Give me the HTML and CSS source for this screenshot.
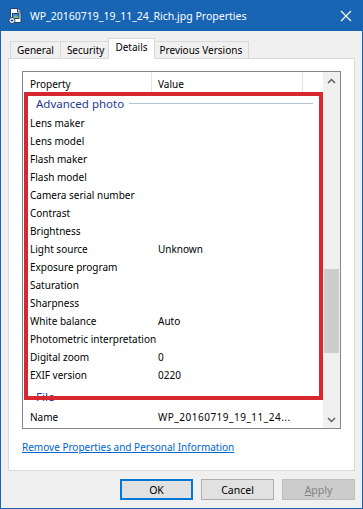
FILE: index.html
```html
<!DOCTYPE html>
<html lang="en">

<head>
  <meta charset="UTF-8">
  <title>WP_20160719_19_11_24_Rich.jpg Properties</title>
  <link rel="stylesheet" href="styles.css">
</head>

<body>
<div class="window">
  <div class="titlebar">
    <svg class="app-icon" width="15" height="17" viewBox="0 0 15 17">
      <path d="M2.5 1.5h7l3.5 3.5v10.5h-10.5z" fill="#fff" stroke="#1d3f6e"/>
      <path d="M9.5 1.5v3.5h3.5" fill="#dfe8f2" stroke="#1d3f6e"/>
      <rect x="4.5" y="6.5" width="6.5" height="5" fill="#3d8fd8" stroke="#1d3f6e"/>
      <path d="M5 11l2-2.5 1.5 1.5 1-1 1.5 2z" fill="#8cc84b"/>
      <circle cx="4" cy="13.5" r="3" fill="#fff" stroke="#1d3f6e"/>
      <path d="M2.7 13.5h2.6M4 12.2v2.6" stroke="#1d3f6e" stroke-width="1"/>
    </svg>
    <span class="title">WP_20160719_19_11_24_Rich.jpg Properties</span>
    <svg class="close" width="12" height="12" viewBox="0 0 12 12">
      <path d="M1 1l10 10M11 1l-10 10" stroke="#fff" stroke-width="1.2"/>
    </svg>
  </div>

  <div class="frame">
    <div class="tabs">
      <div class="tab">General</div>
      <div class="tab">Security</div>
      <div class="tab active">Details</div>
      <div class="tab">Previous Versions</div>
    </div>

    <div class="panel">
      <div class="listbox">
        <div class="list-main">
          <div class="list-head">
            <div class="col-prop">Property</div>
            <div class="col-val">Value</div>
            <div class="col-rest"></div>
          </div>
          <div class="list-body">
            <div class="group"><span>Advanced photo</span></div>
            <div class="row"><span class="prop">Lens maker</span><span class="val"></span></div>
            <div class="row"><span class="prop">Lens model</span><span class="val"></span></div>
            <div class="row"><span class="prop">Flash maker</span><span class="val"></span></div>
            <div class="row"><span class="prop">Flash model</span><span class="val"></span></div>
            <div class="row"><span class="prop">Camera serial number</span><span class="val"></span></div>
            <div class="row"><span class="prop">Contrast</span><span class="val"></span></div>
            <div class="row"><span class="prop">Brightness</span><span class="val"></span></div>
            <div class="row"><span class="prop">Light source</span><span class="val">Unknown</span></div>
            <div class="row"><span class="prop">Exposure program</span><span class="val"></span></div>
            <div class="row"><span class="prop">Saturation</span><span class="val"></span></div>
            <div class="row"><span class="prop">Sharpness</span><span class="val"></span></div>
            <div class="row"><span class="prop">White balance</span><span class="val">Auto</span></div>
            <div class="row"><span class="prop">Photometric interpretation</span><span class="val"></span></div>
            <div class="row"><span class="prop">Digital zoom</span><span class="val">0</span></div>
            <div class="row"><span class="prop">EXIF version</span><span class="val">0220</span></div>
            <div class="group group-file"><span>File</span></div>
            <div class="row"><span class="prop">Name</span><span class="val val-long">WP_20160719_19_11_24...</span></div>
          </div>
        </div>

        <div class="scrollbar">
          <div class="sb-btn">
            <svg width="9" height="6" viewBox="0 0 9 6"><path d="M1 5l3.5-3.5 3.5 3.5" fill="none" stroke="#606060" stroke-width="1.5"/></svg>
          </div>
          <div class="sb-track">
            <div class="sb-thumb"></div>
          </div>
          <div class="sb-btn">
            <svg width="9" height="6" viewBox="0 0 9 6"><path d="M1 1l3.5 3.5 3.5-3.5" fill="none" stroke="#606060" stroke-width="1.5"/></svg>
          </div>
        </div>

        <!-- red annotation box -->
        <div class="highlight"></div>
      </div>

      <a class="link" href="#">Remove Properties and Personal Information</a>
    </div>

    <div class="buttons">
      <button class="btn btn-default">OK</button>
      <button class="btn">Cancel</button>
      <button class="btn" disabled><u>A</u>pply</button>
    </div>
  </div>
</div>
</body>

</html>
```

FILE: styles.css
```css
body {
  margin: 0;
  padding: 0;
  font-family: "Noto Sans", "Open Sans", sans-serif;
  font-size: 10px;
  color: #000;
  background-color: #f0f0f0;
}

:root {
  --accent: #1765b3;
  --border-light: #d9d9d9;
  --list-border: #828790;
  --red: #d7272f;
}

.window {
  width: 363px;
  height: 509px;
  display: flex;
  flex-direction: column;
  background-color: #f0f0f0;
}

.titlebar {
  height: 31px;
  flex: none;
  display: flex;
  align-items: center;
  background-color: var(--accent);
  color: white;
}

.app-icon {
  margin-left: 8px;
  margin-right: 7px;
}

.title {
  flex: 1;
  font-size: 10.5px;
}

.close {
  margin-right: 11px;
}

.frame {
  flex: 1;
  display: flex;
  flex-direction: column;
  border: 1px solid var(--accent);
  border-top: none;
  padding: 7px 7px 0 7px;
}

/* tabs */
.tabs {
  display: flex;
  align-items: flex-end;
  height: 21px;
  padding-left: 2px;
  margin-bottom: -1px;
  position: relative;
  z-index: 1;
}

.tab {
  height: 18px;
  box-sizing: border-box;
  line-height: 17px;
  padding: 0 6px;
  border: 1px solid var(--border-light);
  margin-left: -1px;
  background-color: #f0f0f0;
}

.tab:first-child {
  margin-left: 0;
}

.tab.active {
  height: 21px;
  line-height: 17px;
  background-color: white;
  border-bottom-color: white;
  margin: 0 -2px 0 -3px;
  padding: 0 6px;
  position: relative;
  z-index: 2;
}

.tab.active + .tab {
  margin-left: 0;
}

/* panel */
.panel {
  height: 413px;
  box-sizing: border-box;
  border: 1px solid var(--border-light);
  background-color: white;
  padding: 12px 13px 0 13px;
}

.listbox {
  position: relative;
  height: 358px;
  box-sizing: border-box;
  border: 1px solid var(--list-border);
  display: flex;
  overflow: hidden;
}

.list-main {
  flex: 1;
  display: flex;
  flex-direction: column;
  overflow: hidden;
}

.list-head {
  display: flex;
  height: 21px;
  flex: none;
  line-height: 25px;
}

.col-prop {
  width: 121px;
  padding-left: 7px;
  border-right: 1px solid #e5e5e5;
}

.col-val {
  width: 144px;
  padding-left: 6px;
  border-right: 1px solid #e5e5e5;
}

.col-rest {
  flex: 1;
}

.list-body {
  flex: 1;
  overflow: hidden;
}

.group {
  height: 21px;
  display: flex;
  align-items: center;
  padding: 0 10px 0 13px;
  color: #1e3891;
  font-size: 11.5px;
}

.group::after {
  content: "";
  flex: 1;
  height: 1px;
  margin-left: 5px;
  background-color: #b5c3d3;
}

.group-file {
  height: 24px;
}

.row {
  display: flex;
  height: 18px;
  line-height: 19px;
}

.prop {
  width: 121px;
  padding-left: 7px;
  white-space: nowrap;
}

.val {
  padding-left: 7px;
  white-space: nowrap;
}

.val-long {
  letter-spacing: 0.5px;
}

/* scrollbar */
.scrollbar {
  width: 17px;
  flex: none;
  display: flex;
  flex-direction: column;
  background-color: #f0f0f0;
}

.sb-btn {
  height: 17px;
  display: flex;
  align-items: center;
  justify-content: center;
}

.sb-track {
  flex: 1;
}

.sb-thumb {
  margin: 180px 1px 0 1px;
  height: 84px;
  background-color: #cdcdcd;
}

.highlight {
  position: absolute;
  left: 1px;
  top: 20px;
  width: 299px;
  height: 308px;
  box-sizing: border-box;
  border: 4px solid var(--red);
}

.link {
  display: inline-block;
  margin-top: 10px;
  line-height: 16px;
  color: #0066cc;
  text-decoration: underline;
}

/* buttons */
.buttons {
  display: flex;
  justify-content: flex-end;
  gap: 8px;
  margin-top: 8px;
}

.btn {
  width: 73px;
  height: 21px;
  padding: 0;
  font-family: "Noto Sans", "Open Sans", sans-serif;
  font-size: 10.5px;
  color: #000;
  background-color: #e1e1e1;
  border: 1px solid #adadad;
}

.btn-default {
  border: 2px solid #0078d7;
}

.btn:disabled {
  color: #838383;
  background-color: #cccccc;
  border-color: #bfbfbf;
}
```
